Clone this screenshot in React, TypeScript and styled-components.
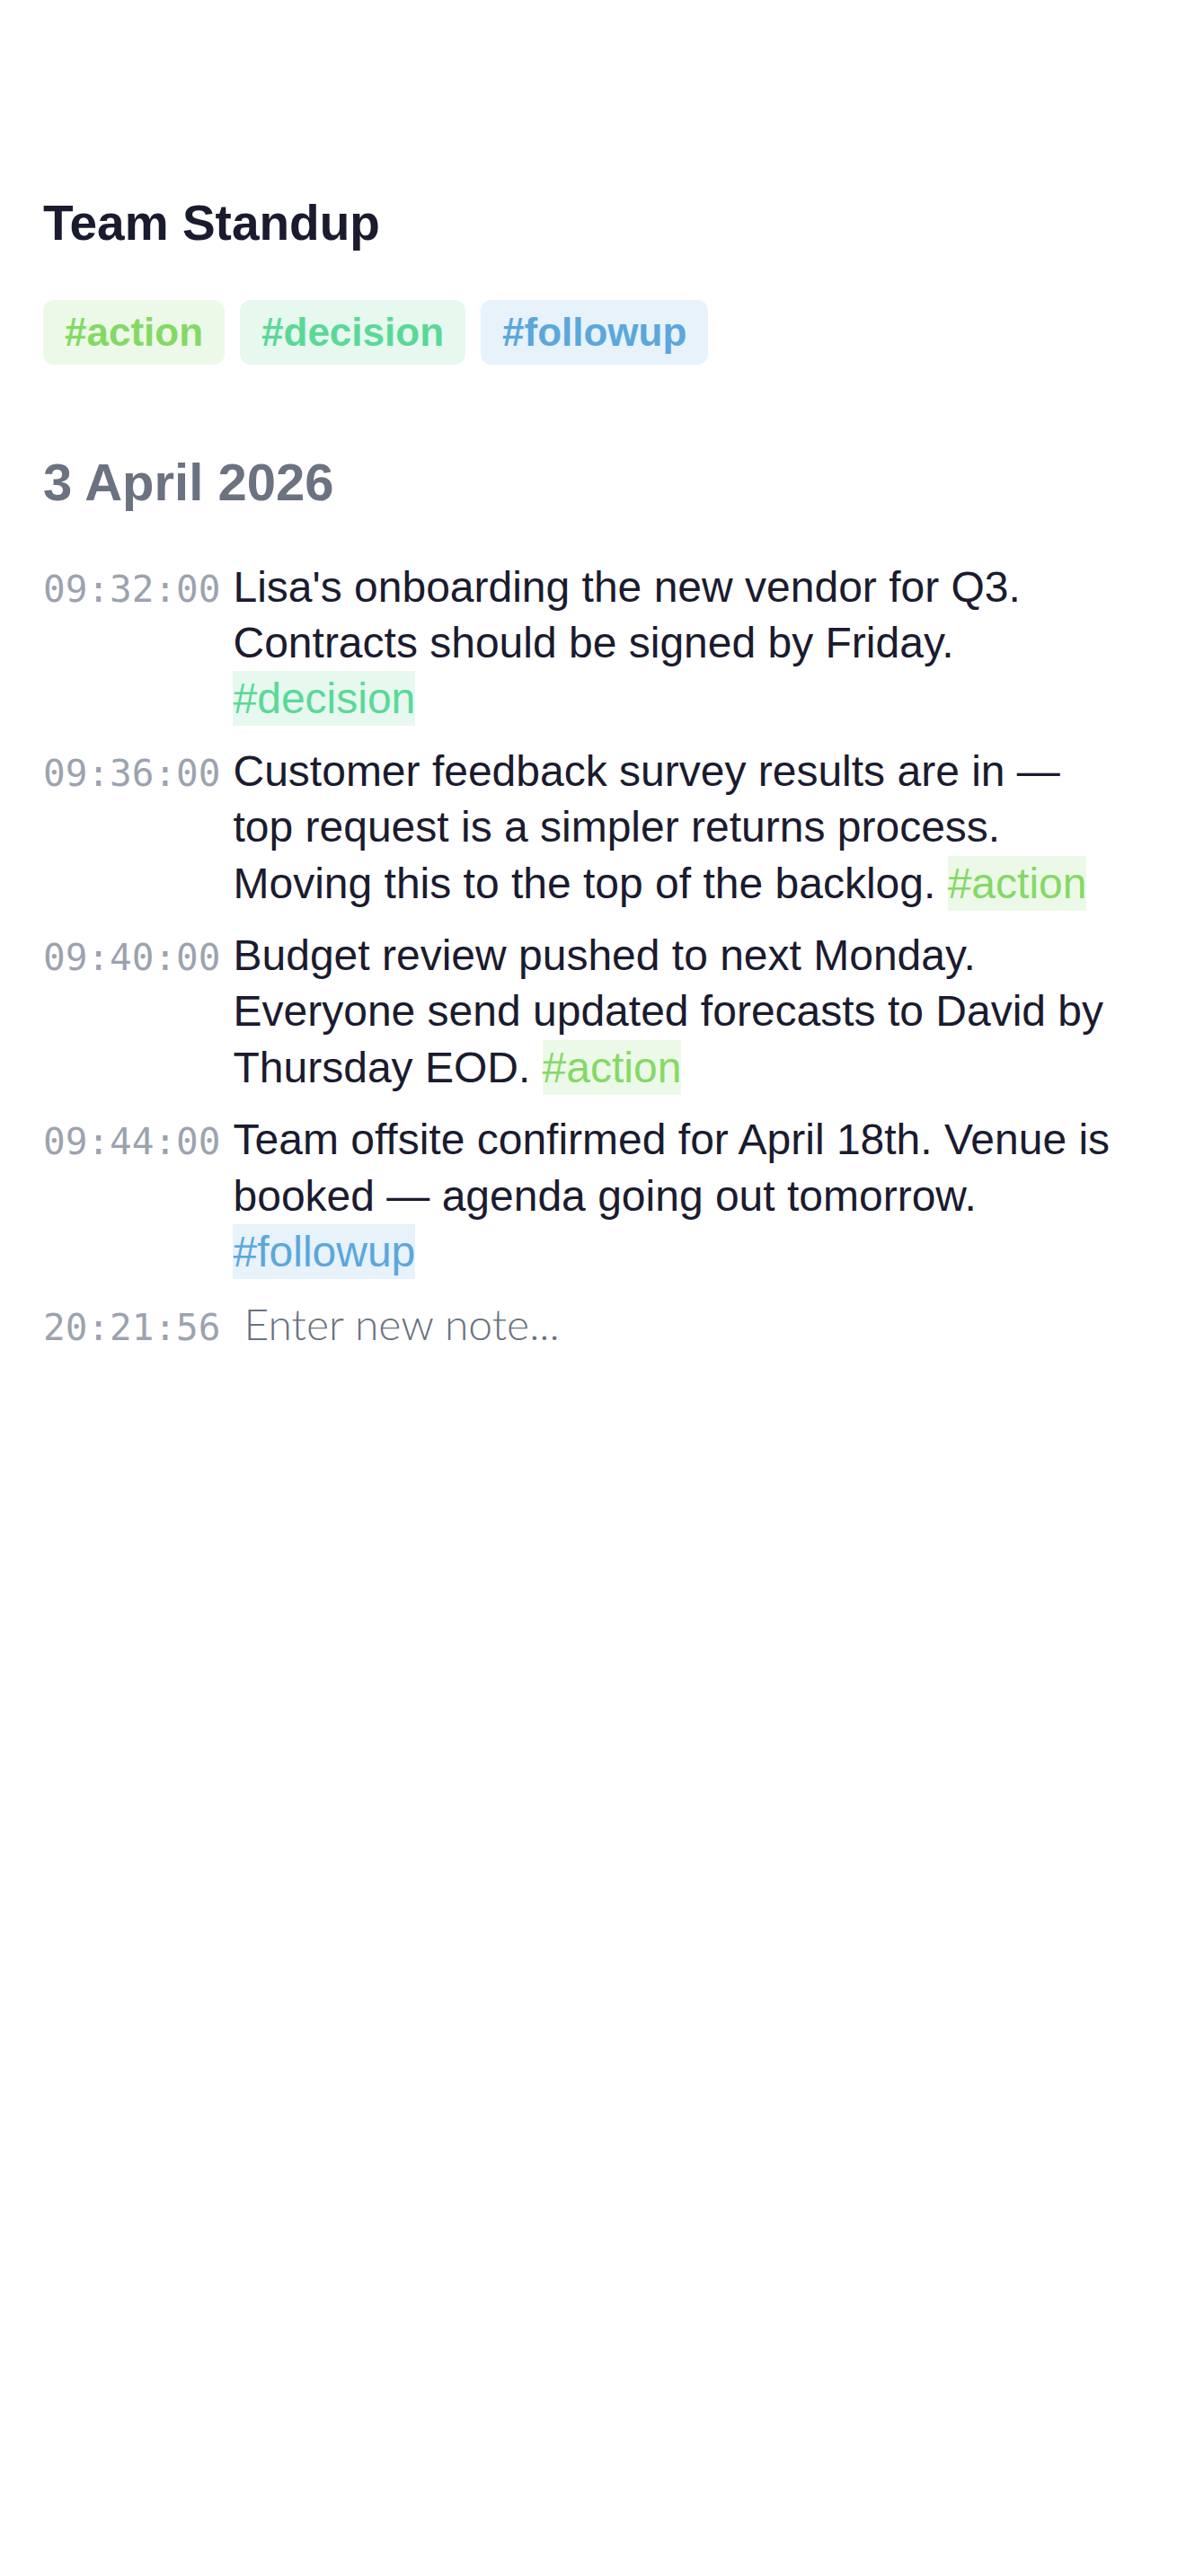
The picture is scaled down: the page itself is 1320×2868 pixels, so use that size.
import React from "react";
import styled, { createGlobalStyle } from "styled-components";

type TagKind = "action" | "decision" | "followup";

const tagColors: Record<TagKind, { fg: string; bg: string }> = {
  action: { fg: "#84d965", bg: "#edf9e8" },
  decision: { fg: "#5ad898", bg: "#e7f8ef" },
  followup: { fg: "#5ba7dc", bg: "#e7f2fa" },
};

const notes: { time: string; text: string; tag: TagKind }[] = [
  {
    time: "09:32:00",
    text: "Lisa's onboarding the new vendor for Q3. Contracts should be signed by Friday.",
    tag: "decision",
  },
  {
    time: "09:36:00",
    text: "Customer feedback survey results are in \u2014 top request is a simpler returns process. Moving this to the top of the backlog.",
    tag: "action",
  },
  {
    time: "09:40:00",
    text: "Budget review pushed to next Monday. Everyone send updated forecasts to David by Thursday EOD.",
    tag: "action",
  },
  {
    time: "09:44:00",
    text: "Team offsite confirmed for April 18th. Venue is booked \u2014 agenda going out tomorrow.",
    tag: "followup",
  },
];

const GlobalStyle = createGlobalStyle`
  html, body {
    margin: 0;
    background: #ffffff;
  }
  body {
    font-family: "Liberation Sans", Arial, sans-serif;
    color: #1b1b2f;
  }
`;

const Page = styled.div`
  padding: 215px 76px 0 48px;
  min-height: 2868px;
  box-sizing: border-box;
`;

const Title = styled.h1`
  margin: 0;
  font-size: 55px;
  line-height: 1.2;
  font-weight: 700;
  color: #1b1b2f;
`;

const TagRow = styled.div`
  display: flex;
  gap: 17px;
  margin-top: 53px;
`;

const Chip = styled.span<{ $kind: TagKind }>`
  display: inline-flex;
  align-items: center;
  height: 72px;
  padding: 0 24px;
  border-radius: 12px;
  font-size: 44px;
  font-weight: 700;
  color: ${(p) => tagColors[p.$kind].fg};
  background: ${(p) => tagColors[p.$kind].bg};
`;

const DateHeading = styled.h2`
  margin: 96px 0 0;
  font-size: 58px;
  line-height: 1.2;
  font-weight: 700;
  color: #6b7280;
`;

const NoteList = styled.div`
  display: flex;
  flex-direction: column;
  gap: 18px;
  margin-top: 51px;
`;

const NoteRow = styled.div`
  display: flex;
  align-items: baseline;
  gap: 14px;
`;

const Time = styled.span`
  flex: none;
  font-family: "DejaVu Sans Mono", "Liberation Mono", monospace;
  font-size: 41px;
  color: #9ca3af;
`;

const NoteText = styled.p`
  margin: 0;
  flex: 1;
  font-size: 48px;
  line-height: 1.3;
  color: #1b1b2f;
`;

const InlineTag = styled.span<{ $kind: TagKind }>`
  padding: 4px 0;
  color: ${(p) => tagColors[p.$kind].fg};
  background: ${(p) => tagColors[p.$kind].bg};
`;

const NoteInput = styled.input`
  flex: 1;
  min-width: 0;
  border: none;
  outline: none;
  background: transparent;
  padding: 0 12px;
  font-family: "Lato", "Liberation Sans", sans-serif;
  font-weight: 300;
  font-size: 48px;
  line-height: 1.3;
  color: #1b1b2f;

  &::placeholder {
    color: #6b7280;
  }
`;

export default function App() {
  return (
    <>
      <GlobalStyle />
      <Page>
        <Title>Team Standup</Title>
        <TagRow>
          <Chip $kind="action">#action</Chip>
          <Chip $kind="decision">#decision</Chip>
          <Chip $kind="followup">#followup</Chip>
        </TagRow>

        <DateHeading>3 April 2026</DateHeading>

        <NoteList>
          {notes.map((n) => (
            <NoteRow key={n.time}>
              <Time>{n.time}</Time>
              <NoteText>
                {n.text} <InlineTag $kind={n.tag}>#{n.tag}</InlineTag>
              </NoteText>
            </NoteRow>
          ))}
          <NoteRow>
            <Time>20:21:56</Time>
            <NoteInput placeholder="Enter new note..." />
          </NoteRow>
        </NoteList>
      </Page>
    </>
  );
}
